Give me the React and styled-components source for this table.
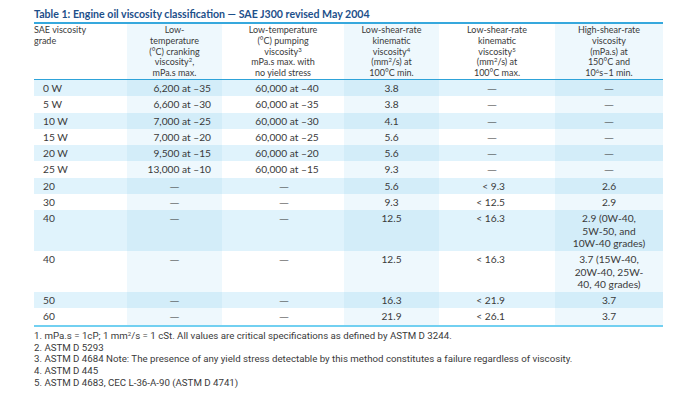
import React from "react";
import styled, { createGlobalStyle } from "styled-components";

const GlobalStyle = createGlobalStyle`
  html, body { margin: 0; padding: 0; background: #ffffff; }
  body { font-family: "Lato", "Open Sans", sans-serif; color: #3a3a3a; }
`;

const Page = styled.div`
  padding: 7px 0 0 34px;
  width: 629px;
`;

const Title = styled.div`
  font-family: "Lato", sans-serif;
  font-weight: 700;
  font-size: 10.6px;
  line-height: 14px;
  color: #1d4f8a;
  border-bottom: 2px solid #36a8dd;
  padding-bottom: 1px;
  white-space: nowrap;
`;

const Table = styled.table`
  border-collapse: collapse;
  table-layout: fixed;
  width: 629px;
  border-bottom: 2px solid #72d0f1;
`;

const HeadCell = styled.th`
  font-weight: 400;
  font-size: 9px;
  line-height: 10.8px;
  vertical-align: top;
  padding: 1px 0 0;
  text-align: ${(p) => p.$align};
  background: ${(p) => (p.$shade ? "#eef8fd" : "#ffffff")};
  border-bottom: 1.5px solid #2ea3d9;
  color: #3a3a3a;
`;

const Cell = styled.td`
  font-size: 10.2px;
  line-height: 12.3px;
  vertical-align: top;
  padding: 2px ${(p) => p.$pr || 0}px 2px ${(p) => p.$pl || 0}px;
  text-align: ${(p) => p.$align};
  white-space: nowrap;
  background: ${(p) =>
    p.$stripe
      ? p.$shade
        ? "#d3edf9"
        : "#e0f3fc"
      : p.$shade
      ? "#eef8fd"
      : "#ffffff"};
`;

const Dash = styled.span`
  font-family: "Open Sans", sans-serif;
  font-size: 9.5px;
  line-height: 0;
  color: #333333;
`;

const Sup = styled.sup`
  font-size: 6px;
  line-height: 0;
  vertical-align: 3px;
`;

const Notes = styled.div`
  margin-top: 3px;
  font-family: "Roboto", sans-serif;
  font-size: 9.7px;
  line-height: 11.8px;
  color: #3a3a3a;
`;

const Note = styled.div`
  white-space: nowrap;
`;

const widths = [93, 95, 122, 95, 116, 108];

const cols = [
  { align: "left", pl: 9, dashAlign: "left", dpl: 9 },
  { align: "right", pr: 11, dashAlign: "center" },
  { align: "center", pl: 8, dashAlign: "center", dpl: 2 },
  { align: "center", dashAlign: "center" },
  { align: "right", pr: 50, dashAlign: "center", dpr: 10 },
  { align: "center", dashAlign: "center" },
];

const D = "—";

const rows = [
  ["0 W", "6,200 at –35", "60,000 at –40", "3.8", D, D],
  ["5 W", "6,600 at –30", "60,000 at –35", "3.8", D, D],
  ["10 W", "7,000 at –25", "60,000 at –30", "4.1", D, D],
  ["15 W", "7,000 at –20", "60,000 at –25", "5.6", D, D],
  ["20 W", "9,500 at –15", "60,000 at –20", "5.6", D, D],
  ["25 W", "13,000 at –10", "60,000 at –15", "9.3", D, D],
  ["20", D, D, "5.6", "< 9.3", "2.6"],
  ["30", D, D, "9.3", "< 12.5", "2.9"],
  ["40", D, D, "12.5", "< 16.3", ["2.9 (0W-40,", "5W-50, and", "10W-40 grades)"]],
  ["40", D, D, "12.5", "< 16.3", ["3.7 (15W-40,", "20W-40, 25W-", "40, 40 grades)"]],
  ["50", D, D, "16.3", "< 21.9", "3.7"],
  ["60", D, D, "21.9", "< 26.1", "3.7"],
];

const headers = [
  <>SAE viscosity<br />grade</>,
  <>Low-<br />temperature<br />(°C) cranking<br />viscosity<Sup>2</Sup>,<br />mPa.s max.</>,
  <>Low-temperature<br />(°C) pumping<br />viscosity<Sup>3</Sup><br />mPa.s max. with<br />no yield stress</>,
  <>Low-shear-rate<br />kinematic<br />viscosity<Sup>4</Sup><br />(mm<Sup>2</Sup>/s) at<br />100°C min.</>,
  <>Low-shear-rate<br />kinematic<br />viscosity<Sup>5</Sup><br />(mm<Sup>2</Sup>/s) at<br />100°C max.</>,
  <>High-shear-rate<br />viscosity<br />(mPa.s) at<br />150°C and<br />10<Sup>6</Sup>s–1 min.</>,
];

function renderValue(v) {
  if (v === D) return <Dash>{D}</Dash>;
  if (Array.isArray(v)) {
    return v.map((line, i) => (
      <React.Fragment key={i}>
        {i > 0 && <br />}
        {line}
      </React.Fragment>
    ));
  }
  return v;
}

export default function App() {
  return (
    <>
      <GlobalStyle />
      <Page>
        <Title>Table 1: Engine oil viscosity classification — SAE J300 revised May 2004</Title>
        <Table>
          <colgroup>
            {widths.map((w, i) => (
              <col key={i} style={{ width: w }} />
            ))}
          </colgroup>
          <thead>
            <tr>
              {headers.map((h, i) => (
                <HeadCell key={i} $align={i === 0 ? "left" : "center"} $shade={i % 2 === 1}>
                  {h}
                </HeadCell>
              ))}
            </tr>
          </thead>
          <tbody>
            {rows.map((r, ri) => (
              <tr key={ri}>
                {r.map((v, ci) => {
                  const c = cols[ci];
                  const dash = v === D;
                  return (
                    <Cell
                      key={ci}
                      $stripe={ri % 2 === 0}
                      $shade={ci % 2 === 1}
                      $align={dash ? c.dashAlign : c.align}
                      $pl={dash ? c.dpl : c.pl}
                      $pr={dash ? c.dpr : c.pr}
                    >
                      {renderValue(v)}
                    </Cell>
                  );
                })}
              </tr>
            ))}
          </tbody>
        </Table>
        <Notes>
          <Note>1. mPa.s = 1cP; 1 mm<Sup>2</Sup>/s = 1 cSt. All values are critical specifications as defined by ASTM D 3244.</Note>
          <Note>2. ASTM D 5293</Note>
          <Note>3. ASTM D 4684 Note: The presence of any yield stress detectable by this method constitutes a failure regardless of viscosity.</Note>
          <Note>4. ASTM D 445</Note>
          <Note>5. ASTM D 4683, CEC L-36-A-90 (ASTM D 4741)</Note>
        </Notes>
      </Page>
    </>
  );
}
